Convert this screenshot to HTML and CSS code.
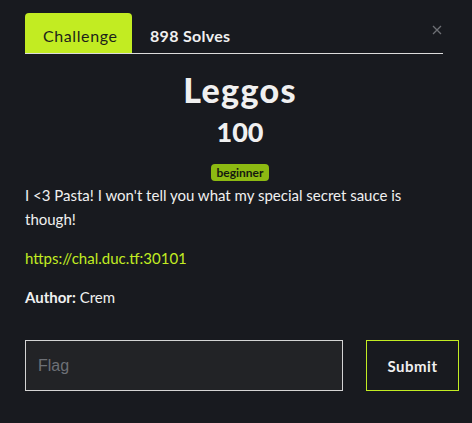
FILE: index.html
```html
<!DOCTYPE html>
<html lang="en">
<head>
    <meta charset="UTF-8">
    <meta name="viewport" content="width=device-width, initial-scale=1.0">
    <title>Leggos</title>
    <link rel="stylesheet" href="styles.css">
</head>
<body>
    <div class="modal">
        <button class="close" aria-label="Close">
            <svg width="10" height="10" viewBox="0 0 10 10">
                <path d="M1 1 L9 9 M9 1 L1 9" stroke="#6e7075" stroke-width="1.3" fill="none"/>
            </svg>
        </button>

        <nav class="tabs">
            <a class="tab active" href="#">Challenge</a>
            <a class="tab" href="#">898 Solves</a>
        </nav>

        <div class="header">
            <h2 class="name">Leggos</h2>
            <h3 class="value">100</h3>
            <span class="badge">beginner</span>
        </div>

        <div class="description">
            <p>I &lt;3 Pasta! I won't tell you what my special secret sauce is though!</p>
            <p><a href="#">https://chal.duc.tf:30101</a></p>
            <p><strong>Author:</strong> Crem</p>
        </div>

        <form class="submit-row">
            <input type="text" placeholder="Flag">
            <button type="submit">Submit</button>
        </form>
    </div>
</body>
</html>
```

FILE: styles.css
```css
body {
    margin: 0;
    background-color: #181a1f;
    color: #f0f0f0;
    font-family: Lato, "Liberation Sans", sans-serif;
}

.modal {
    position: relative;
    padding: 13px 13px 0 25px;
}

.close {
    position: absolute;
    top: 23px;
    right: 30px;
    background: none;
    border: none;
    padding: 0;
    cursor: pointer;
}

.tabs {
    display: flex;
    width: 418px;
    border-bottom: 1px solid #dcdcdc;
}

.tab {
    height: 40px;
    line-height: 45px;
    padding: 0 18px;
    font-size: 16px;
    color: #f0f0f0;
    font-weight: bold;
    letter-spacing: 0.3px;
    text-decoration: none;
}

.tab.active {
    width: 71px;
    text-align: center;
    background-color: #c2ec22;
    color: #1c1f1a;
    font-weight: normal;
    letter-spacing: 0.6px;
    border-radius: 4px 4px 0 0;
}

.header {
    display: flex;
    flex-direction: column;
    align-items: center;
    width: 430px;
}

.name {
    margin: 16px 0 0;
    font-size: 34px;
    line-height: 40px;
    font-weight: 900;
    letter-spacing: 1.3px;
}

.value {
    margin: 6px 0 0;
    font-size: 27px;
    line-height: 32px;
    font-weight: 900;
}

.badge {
    margin-top: 16px;
    padding: 0 5px;
    height: 17px;
    line-height: 18px;
    font-size: 12px;
    font-weight: bold;
    color: #15180f;
    background-color: #8dba12;
    border-radius: 4px;
}

.description {
    width: 430px;
    font-size: 15px;
    line-height: 24px;
}

.description p {
    margin: 0 0 15px;
}

.description p:first-child {
    margin-top: 2px;
}

.description a {
    color: #c2ec22;
    text-decoration: none;
}

.submit-row {
    display: flex;
    gap: 23px;
    margin-top: 31px;
}

.submit-row input {
    width: 318px;
    height: 51px;
    box-sizing: border-box;
    padding: 0 12px;
    background-color: #222326;
    border: 1px solid #d4d4d4;
    color: #f0f0f0;
    font-family: "Liberation Sans", Arial, sans-serif;
    font-size: 16px;
}

.submit-row input::placeholder {
    color: #6d7076;
}

.submit-row button {
    width: 93px;
    height: 51px;
    background-color: transparent;
    border: 1px solid #c2ec22;
    color: #f0f0f0;
    font-family: Lato, sans-serif;
    font-size: 15px;
    font-weight: bold;
    letter-spacing: 0.5px;
    cursor: pointer;
}
```
